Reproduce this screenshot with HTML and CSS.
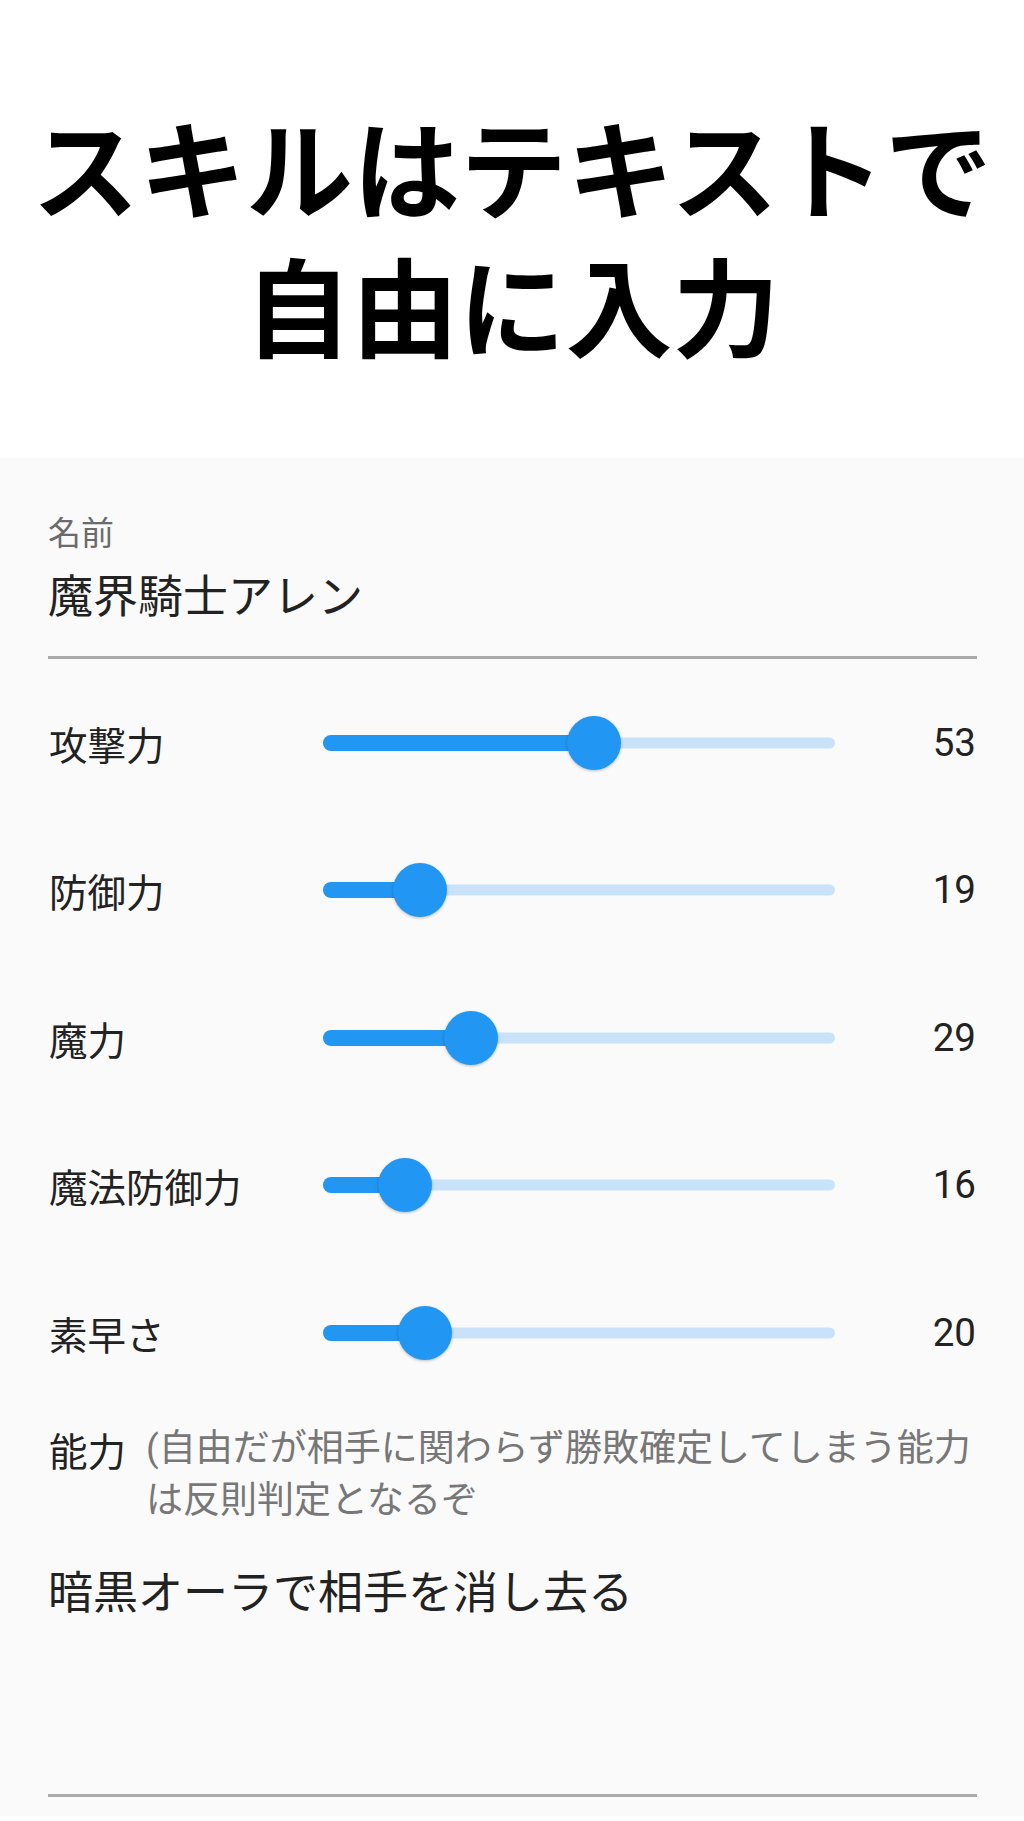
FILE: index.html
```html
<!DOCTYPE html>
<html lang="ja">
<head>
    <meta charset="UTF-8">
    <meta name="viewport" content="width=device-width, initial-scale=1.0">
    <title>スキルはテキストで自由に入力</title>
    <link rel="stylesheet" href="styles.css">
</head>
<body>
    <header class="headline">
        <h1>スキルはテキストで<br>自由に入力</h1>
    </header>

    <main class="sheet">
        <!-- Name field -->
        <div class="field">
            <div class="field-label">名前</div>
            <div class="field-value">魔界騎士アレン</div>
        </div>

        <!-- Stat sliders -->
        <div class="stats">
            <div class="stat">
                <span class="stat-name">攻撃力</span>
                <div class="slider">
                    <div class="track"></div>
                    <div class="track-active" style="width: 53%"></div>
                    <div class="thumb" style="left: 53%"></div>
                </div>
                <span class="stat-value">53</span>
            </div>
            <div class="stat">
                <span class="stat-name">防御力</span>
                <div class="slider">
                    <div class="track"></div>
                    <div class="track-active" style="width: 19%"></div>
                    <div class="thumb" style="left: 19%"></div>
                </div>
                <span class="stat-value">19</span>
            </div>
            <div class="stat">
                <span class="stat-name">魔力</span>
                <div class="slider">
                    <div class="track"></div>
                    <div class="track-active" style="width: 29%"></div>
                    <div class="thumb" style="left: 29%"></div>
                </div>
                <span class="stat-value">29</span>
            </div>
            <div class="stat">
                <span class="stat-name">魔法防御力</span>
                <div class="slider">
                    <div class="track"></div>
                    <div class="track-active" style="width: 16%"></div>
                    <div class="thumb" style="left: 16%"></div>
                </div>
                <span class="stat-value">16</span>
            </div>
            <div class="stat">
                <span class="stat-name">素早さ</span>
                <div class="slider">
                    <div class="track"></div>
                    <div class="track-active" style="width: 20%"></div>
                    <div class="thumb" style="left: 20%"></div>
                </div>
                <span class="stat-value">20</span>
            </div>
        </div>

        <!-- Ability field -->
        <div class="ability">
            <div class="ability-head">
                <span class="ability-label">能力</span>
                <span class="ability-hint">(自由だが相手に関わらず勝敗確定してしまう能力<br>は反則判定となるぞ</span>
            </div>
            <div class="ability-text">暗黒オーラで相手を消し去る</div>
        </div>
    </main>
</body>
</html>
```

FILE: styles.css
```css
/* Page */
body {
    margin: 0;
    background: #fff;
    font-family: Roboto, "Noto Sans CJK JP", sans-serif;
    color: #222;
}

/* Big title */
.headline {
    height: 458px;
    box-sizing: border-box;
    padding-top: 96px;
}

.headline h1 {
    margin: 0;
    font-family: "Noto Sans CJK JP", sans-serif;
    font-size: 107px;
    font-weight: 700;
    line-height: 138px;
    text-align: center;
    color: #000;
}

/* Form sheet */
.sheet {
    background: #fafafa;
    padding: 53px 0 19px;
}

/* Name field */
.field {
    margin: 0 47px 0 48px;
    padding-bottom: 34px;
    border-bottom: 3px solid #aaa;
}

.field-label {
    font-family: "Noto Sans CJK JP", sans-serif;
    font-size: 33px;
    line-height: 40px;
    color: #6b6b6b;
}

.field-value {
    margin-top: 15px;
    font-family: "Noto Sans CJK JP", sans-serif;
    font-size: 45px;
    line-height: 56px;
    color: #222;
}

/* Sliders */
.stats {
    margin-top: 10px;
    padding: 0 48px 0 49px;
}

.stat {
    display: grid;
    grid-template-columns: 274px 1fr 141px;
    align-items: center;
    height: 147.5px;
}

.stat-name {
    font-family: "Noto Sans CJK JP", sans-serif;
    font-size: 38.5px;
    line-height: 52px;
}

.stat-value {
    text-align: right;
    font-size: 38.5px;
    line-height: 52px;
    color: #222;
}

.slider {
    position: relative;
    height: 56px;
}

.track,
.track-active {
    position: absolute;
    left: 0;
    top: 50%;
    transform: translateY(-50%);
}

.track {
    width: 100%;
    height: 11px;
    border-radius: 6px;
    background: #c7e2f9;
}

.track-active {
    height: 16px;
    border-radius: 8px 0 0 8px;
    background: #2196f3;
}

.thumb {
    position: absolute;
    top: 50%;
    width: 54px;
    height: 54px;
    border-radius: 50%;
    background: #2196f3;
    transform: translate(-50%, -50%);
    box-shadow: 0 1px 3px rgba(0, 0, 0, 0.25);
}

/* Ability field */
.ability {
    margin: 16px 47px 0 48px;
    padding-bottom: 176px;
    border-bottom: 3px solid #aaa;
}

.ability-head {
    display: flex;
    gap: 20px;
    padding-left: 1px;
}

.ability-label {
    flex: none;
    font-family: "Noto Sans CJK JP", sans-serif;
    font-size: 38.5px;
    line-height: 52px;
    color: #222;
}

.ability-hint {
    font-size: 37px;
    line-height: 52px;
    color: #777;
}

.ability-text {
    margin-top: 35px;
    font-family: "Noto Sans CJK JP", sans-serif;
    font-size: 45px;
    line-height: 56px;
    color: #222;
}
```
